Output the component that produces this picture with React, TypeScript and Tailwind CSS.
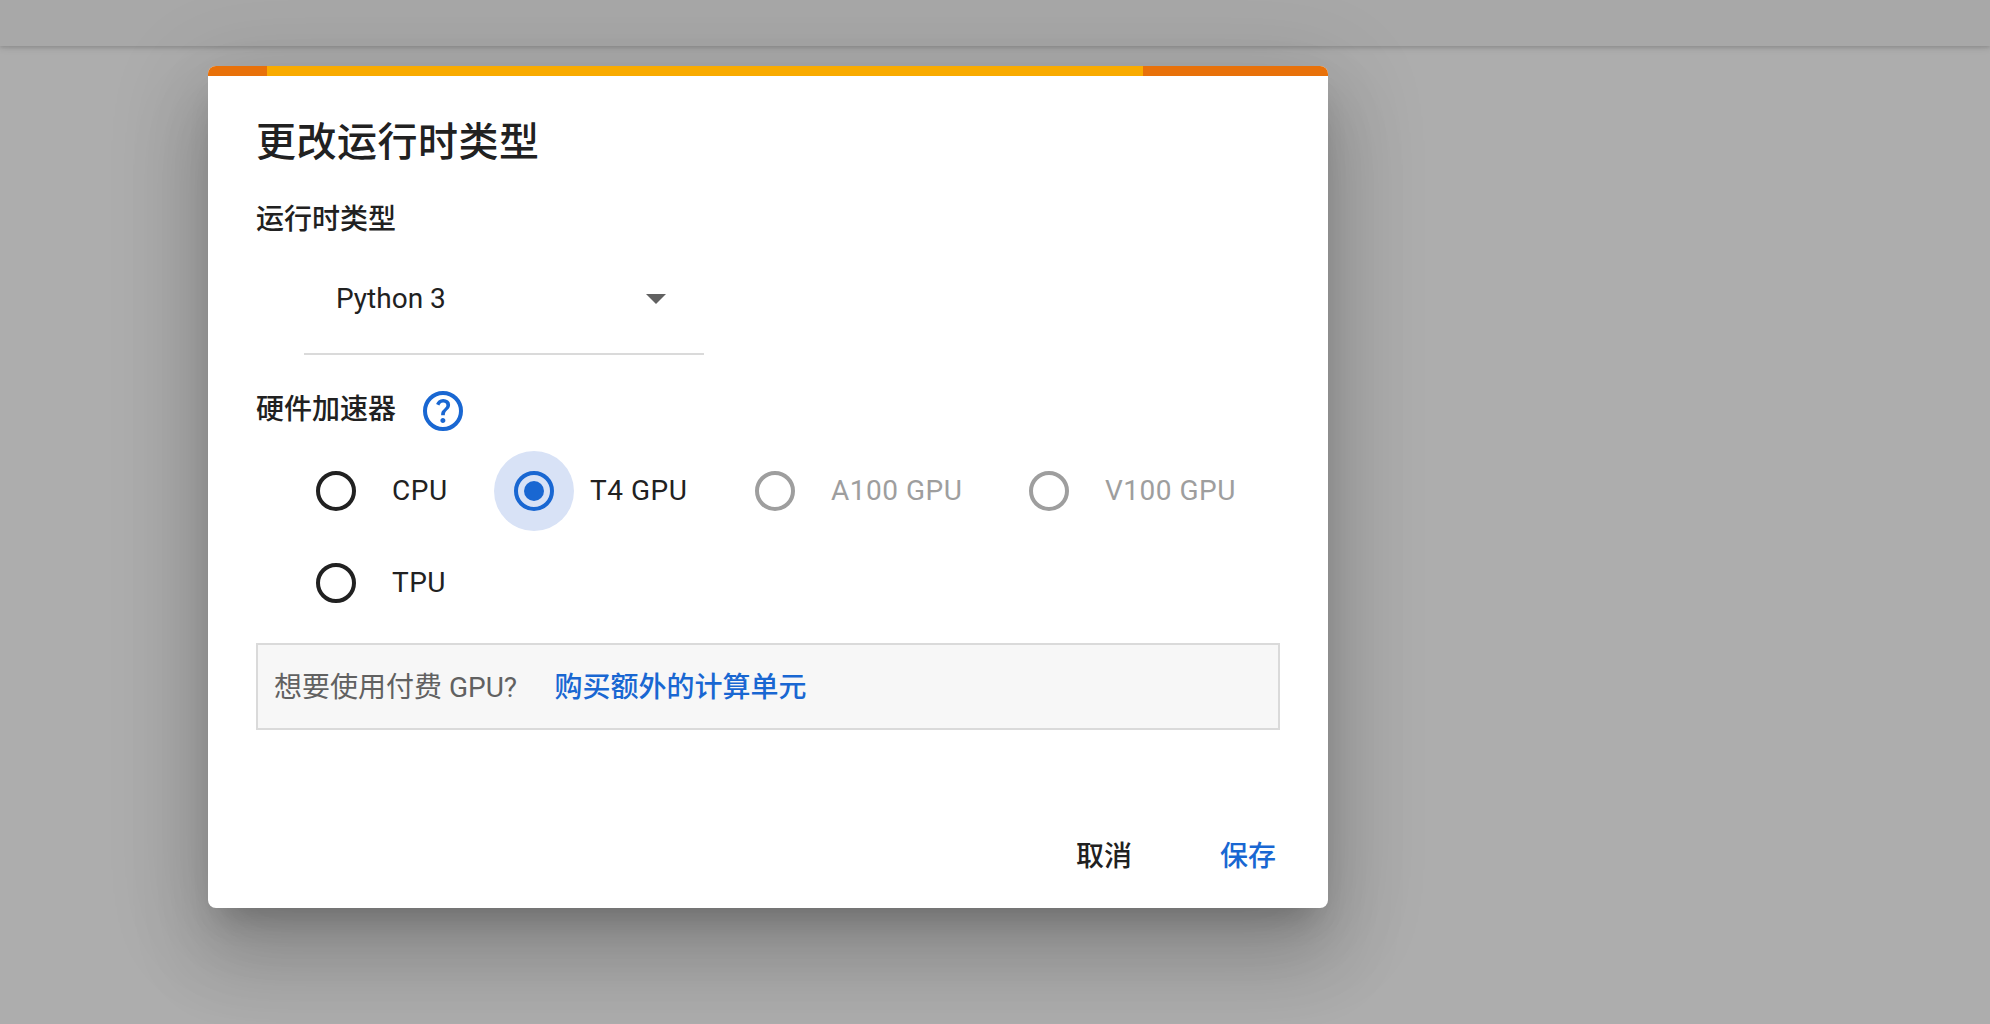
import React from "react";

type RadioState = "on" | "off" | "disabled";

const ringClass: Record<RadioState, string> = {
  on: "border-[#1967d2]",
  off: "border-[#212121]",
  disabled: "border-[#9e9e9e]",
};

interface RadioProps {
  label: string;
  state: RadioState;
  className?: string;
}

function Radio({ label, state, className = "" }: RadioProps) {
  return (
    <label className={`flex h-20 items-center ${className}`}>
      <span
        className={`flex size-20 shrink-0 items-center justify-center rounded-full ${state === "on" ? "bg-[#d8e2f6]" : ""}`}
      >
        <span className={`flex size-10 items-center justify-center rounded-full border-4 ${ringClass[state]}`}>
          {state === "on" && <span className="size-5 rounded-full bg-[#1967d2]" />}
        </span>
      </span>
      <span
        className={`ml-4 whitespace-nowrap text-[28px] leading-10 tracking-[0.5px] ${
          state === "disabled" ? "text-[#9e9e9e]" : "text-[#212121]"
        }`}
      >
        {label}
      </span>
    </label>
  );
}

function HelpIcon() {
  return (
    <svg viewBox="0 -960 960 960" className="size-12 fill-[#1967d2]" aria-hidden="true">
      <path d="M478-240q21 0 35.5-14.5T528-290q0-21-14.5-35.5T478-340q-21 0-35.5 14.5T428-290q0 21 14.5 35.5T478-240Zm-36-154h74q0-33 7.5-52t42.5-52q26-26 41-49.5t15-56.5q0-56-41-86t-97-30q-57 0-92.5 30T342-618l66 26q5-18 22.5-39t53.5-21q32 0 48 17.5t16 38.5q0 20-12 37.5T506-526q-44 39-54 59t-10 73Z" />
      <circle cx="480" cy="-480" r="360" fill="none" stroke="#1967d2" strokeWidth="80" />
    </svg>
  );
}

export default function App() {
  return (
    <div className="relative h-[1024px] w-[1990px] overflow-hidden bg-[#adadad] font-[Roboto,'Noto_Sans_CJK_SC',sans-serif] text-[#212121]">
      <header className="h-[46px] bg-[#a8a8a8] shadow-[0_2px_3px_rgba(0,0,0,0.09),0_1px_8px_rgba(0,0,0,0.13)]" />

      <div
        role="dialog"
        className="relative mt-5 ml-[208px] flex h-[842px] w-[1120px] flex-col rounded-lg bg-white shadow-[0_22px_30px_-14px_rgba(0,0,0,0.2),0_48px_76px_6px_rgba(0,0,0,0.14),0_18px_92px_16px_rgba(0,0,0,0.12)]"
      >
        <div className="h-2.5 shrink-0 rounded-t-lg bg-[linear-gradient(90deg,#e8710a_59.5px,#f9ab00_59.5px,#f9ab00_935.5px,#e8710a_935.5px)]" />

        <div className="flex flex-1 flex-col px-12">
          <h2 className="mt-[41px] h-[52px] text-[40px] leading-[52px] font-medium tracking-[0.5px]">更改运行时类型</h2>

          <h3 className="mt-[31px] h-10 text-[28px] leading-10 font-medium">运行时类型</h3>

          <div className="mt-1 ml-12 flex h-[111px] w-[400px] items-center justify-between border-b-2 border-[#dadada] pr-[38px] pl-8">
            <span className="text-[28px] leading-10">Python 3</span>
            <svg viewBox="0 0 20 10" className="h-2.5 w-5 fill-[#616161]" aria-hidden="true">
              <path d="M0 0h20L10 10z" />
            </svg>
          </div>

          <div className="mt-8 flex h-12 items-center">
            <h3 className="mb-0.5 h-10 text-[28px] leading-10 font-medium">硬件加速器</h3>
            <span className="ml-[23px]">
              <HelpIcon />
            </span>
          </div>

          <div className="mt-4 ml-10 flex">
            <Radio label="CPU" state="off" className="w-[198px]" />
            <Radio label="T4 GPU" state="on" className="w-[241px]" />
            <Radio label="A100 GPU" state="disabled" className="w-[274px]" />
            <Radio label="V100 GPU" state="disabled" />
          </div>
          <div className="mt-3 ml-10 flex">
            <Radio label="TPU" state="off" />
          </div>

          <div className="mt-5 flex h-[87px] items-center border-2 border-[#dadada] bg-[#f7f7f7] px-4 pt-[3px] text-[28px]">
            <span className="h-10 leading-10 text-[#616161]">想要使用付费 GPU?</span>
            <a className="ml-[37.5px] h-10 leading-10 font-medium text-[#1967d2]">购买额外的计算单元</a>
          </div>

          <div className="mt-[107px] flex h-10 justify-end pr-1 text-[28px] leading-10 font-medium">
            <button className="h-10">取消</button>
            <button className="ml-[88px] h-10 text-[#1967d2]">保存</button>
          </div>
        </div>
      </div>
    </div>
  );
}
